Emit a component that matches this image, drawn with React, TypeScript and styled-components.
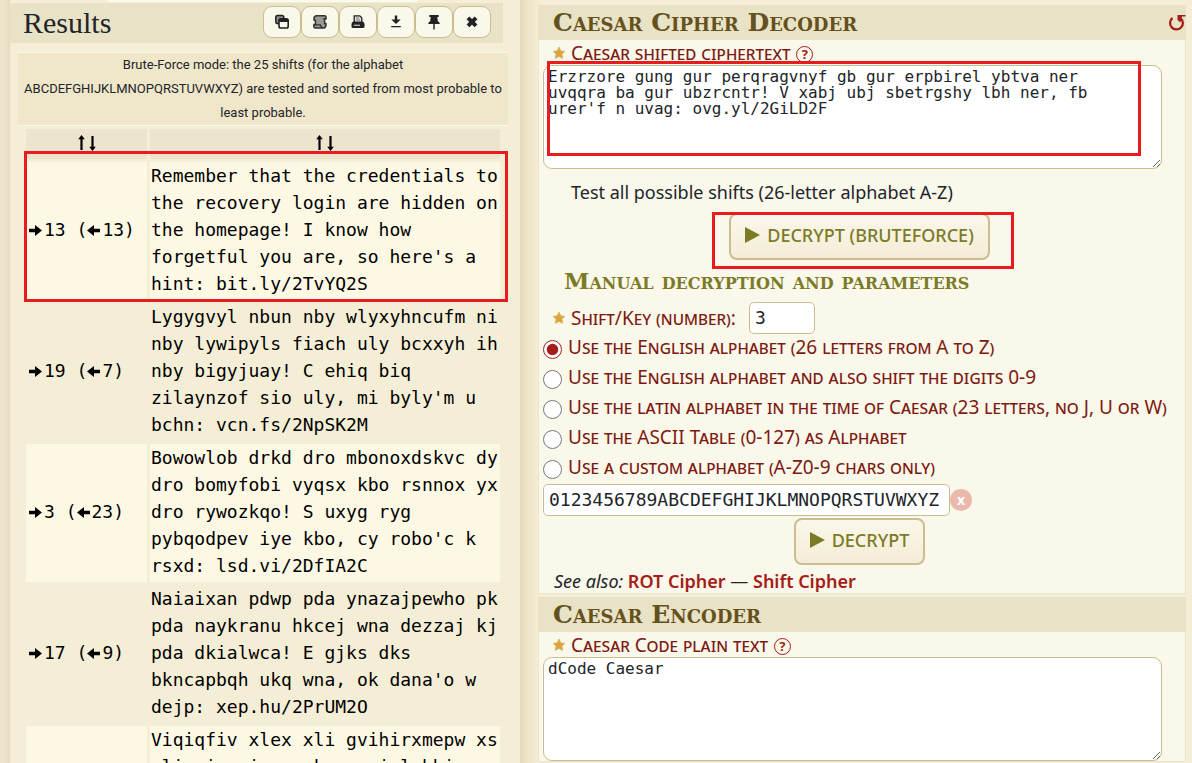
import React from "react";
import styled, { createGlobalStyle } from "styled-components";

const sans = `"Trebuchet MS", "Noto Sans", sans-serif`;
const serif = `Georgia, "Liberation Serif", serif`;
const slab = `"DejaVu Serif", serif`;
const mono = `"DejaVu Sans Mono", monospace`;

const c = {
  paper: "#f5eed6",
  bar: "#e8e2c6",
  panel: "#faf7eb",
  line: "#ccbd8e",
  ink: "#212529",
  wine: "#7d1a10",
  red: "#a61c16",
  olive: "#7b7b26",
  brown: "#65511c",
};

const Global = createGlobalStyle`
  *, *::before, *::after { box-sizing: border-box; }
  body { margin: 0; background: ${c.paper}; color: ${c.ink}; font-family: ${sans}; }
  h2, h3, p { margin: 0; }
`;

const Page = styled.div`
  display: grid;
  grid-template-columns: minmax(0, 510fr) minmax(0, 666fr);
  height: 100vh;
  overflow: hidden;
  padding: 0 6px 0 10px;
  background: linear-gradient(90deg, #ece4cc 0, #ece4cc 4px, #e5dcc0 10px, ${c.paper} 10px);
`;

const Results = styled.section``;

const SearchEdge = styled.div`
  height: 2px;
  margin: 0 102px 1px 97px;
  border-radius: 0 0 4px 4px;
  background: #fbf8ee;
`;

const ResultsBar = styled.header`
  display: flex;
  align-items: center;
  justify-content: space-between;
  height: 40px;
  margin-right: 17px;
  padding: 0 12px 0 13px;
  background: ${c.bar};
`;

const ResultsTitle = styled.h2`
  font: 400 30px/36px ${serif};
`;

const Tools = styled.div`
  display: flex;
  margin-bottom: 2px;
`;

const ToolButton = styled.button`
  display: grid;
  place-items: center;
  width: 38px;
  height: 32px;
  padding: 0;
  border: 1px solid ${c.line};
  border-radius: 9px;
  background: ${c.panel};
  color: #222;
`;

const Message = styled.p`
  margin: 9px 12px 0 8px;
  border: 1px solid #fbf7e8;
  border-width: 1px 0;
  background: #f0e6ca;
  font-family: Roboto, sans-serif;
  font-size: 13px;
  line-height: 24px;
  text-align: center;
`;

const TableWrap = styled.div`
  position: relative;
  margin: 0 17px 0 13px;
`;

const Table = styled.table`
  width: 100%;
  table-layout: fixed;
  border-spacing: 3px;
  color: #000;
  font: 18px/27px ${mono};

  tbody tr:nth-child(odd) td { background: #fcf8e4; }
`;

const SortHead = styled.th`
  height: 30px;
  padding: 0;
  background: #ece4cd;
  line-height: 0;

  &:first-child { width: 121px; }
`;

const SortButton = styled.button`
  padding: 0;
  border: 0;
  background: none;
  color: #000;
`;

const ShiftCell = styled.td`
  padding: 0 3px 3px;
  white-space: nowrap;
`;

const TextCell = styled.td`
  padding: 0 1px 3px;
  white-space: pre;
`;

const Mark = styled.div<{ $inset: string; $height?: string }>`
  position: absolute;
  inset: ${(p) => p.$inset};
  height: ${(p) => p.$height ?? "auto"};
  border: 3px solid #e81b1e;
  pointer-events: none;
`;

const Forms = styled.main`
  padding: 5px 0 0 18px;
  background: linear-gradient(90deg, #e6d9b4 0, #efe4c8 7px, #f1e7cd 13px, ${c.paper} 18px);
`;

const Panel = styled.form`
  margin-bottom: 3px;
  background: ${c.panel};
`;

const PanelTitle = styled.h2`
  display: flex;
  align-items: center;
  justify-content: space-between;
  height: 35px;
  padding-left: 15px;
  background: ${c.bar};
  color: ${c.brown};
  font: small-caps 700 25px/33px ${slab};
`;

const Reset = styled.button`
  display: flex;
  padding: 0;
  border: 0;
  background: none;
  color: ${c.red};
`;

const PanelBody = styled.div`
  display: flex;
  flex-direction: column;
  align-items: flex-start;
  padding: 0 9px 0 4px;
  border: 1px solid #eae3cd;
  border-top: 0;
`;

const LabelRow = styled.div`
  display: flex;
  align-items: center;
  gap: 6px;
  min-height: 25px;
  padding: 0 0 0 10px;
`;

const Label = styled.label`
  color: ${c.wine};
  font-size: 19px;
  font-variant: small-caps;
  line-height: 24px;
`;

const Help = styled.button`
  width: 17px;
  height: 17px;
  margin-top: 3px;
  padding: 0;
  border: 1px solid ${c.red};
  border-radius: 50%;
  background: ${c.panel};
  color: ${c.red};
  font: 700 13px/15px ${sans};
`;

const AreaWrap = styled.div`
  position: relative;
  align-self: stretch;
  margin-right: 14px;
`;

const Area = styled.textarea`
  display: block;
  width: 100%;
  height: 104px;
  padding: 3px 4px;
  border: 1px solid ${c.line};
  border-radius: 9px;
  background: #fff;
  color: ${c.ink};
  font: 16px/16px ${mono};
`;

const Hint = styled.p`
  padding: 10px 0 8px 28px;
  font-size: 18px;
  line-height: 26px;
`;

const ButtonRow = styled.div<{ $gap: string }>`
  position: relative;
  align-self: center;
  margin: ${(p) => p.$gap};
`;

const Submit = styled.button`
  display: flex;
  align-items: center;
  gap: 7px;
  height: 47px;
  padding: 0 14px 4px;
  border: 2px solid ${c.line};
  border-radius: 8px;
  background: linear-gradient(#faf7eb, #f4ecd6);
  color: ${c.olive};
  font: 500 18px/24px ${sans};
`;

const SubTitle = styled.h3`
  padding: 7px 0 7px 21px;
  color: ${c.olive};
  font: small-caps 700 23px/28px ${slab};
`;

const Field = styled.input`
  height: 32px;
  padding: 0 5px 2px;
  border: 1px solid ${c.line};
  border-radius: 5px;
  background: #fff;
  color: ${c.ink};
  font: 18px/24px ${mono};

  &[name="shift"] { width: 66px; margin-left: 7px; }
  &[name="alphabet"] { width: 407px; }
`;

const Choice = styled.label`
  display: flex;
  align-items: center;
  gap: 6px;
  height: 30px;
  color: ${c.wine};
  font-size: 19px;
  font-variant: small-caps;
  line-height: 24px;
  white-space: nowrap;

  input { flex: none; width: 19px; height: 19px; margin: 0; accent-color: ${c.red}; }
  span { padding-bottom: 4px; }
`;

const Row = styled.div`
  display: flex;
  align-items: center;
`;

const Clear = styled.button`
  width: 22px;
  height: 22px;
  padding: 0;
  border: 0;
  border-radius: 50%;
  background: #ebb9ab;
  color: #fff;
  font: 700 14px/20px ${sans};
`;

const SeeAlso = styled.p`
  padding: 5px 0 0 11px;
  font-size: 18px;
  line-height: 23px;

  a { color: ${c.red}; font-weight: 600; text-decoration: none; }
`;

const Star = () => (
  <svg width="12" height="14" viewBox="0 0 12 14" aria-hidden="true">
    <path
      d="M6 1.2 7.7 4.9 11.7 5.4 8.8 8.2 9.6 12.3 6 10.4 2.4 12.3 3.2 8.2 .3 5.4 4.3 4.9Z"
      fill="#d9a441"
      stroke="#dfb04f"
      strokeWidth="1"
      strokeLinejoin="round"
    />
  </svg>
);

const Play = () => (
  <svg width="15" height="16" viewBox="0 0 15 16" aria-hidden="true">
    <path d="M0 0 15 8 0 16Z" fill="currentColor" />
  </svg>
);

const Arrow = ({ left }: { left?: boolean }) => (
  <svg width="15" height="11" viewBox="0 0 15 11" aria-hidden="true">
    <path
      d={left ? "M0 5.5 7 0V3.8H13V7.2H7V11Z" : "M13 5.5 6 0V3.8H0V7.2H6V11Z"}
      fill="currentColor"
    />
  </svg>
);

const SortIcon = () => (
  <svg width="18" height="16" viewBox="0 0 18 16" aria-hidden="true">
    <path d="M3.5 0 6.8 4.2H4.6V15H2.4V4.2H.2Z M14.5 16 11.2 11.8H13.4V1H15.6V11.8H17.8Z" fill="currentColor" />
  </svg>
);

const toolIcons: [string, React.ReactNode][] = [
  ["Copy", <g key="i">
    <rect x="1.8" y="1.5" width="8" height="8" rx="1.8" fill="#8b8b87" stroke="#222" strokeWidth="1.5" />
    <rect x="5" y="4.8" width="9.2" height="9.2" rx="1.8" fill="#faf7eb" stroke="#222" strokeWidth="1.6" />
    <path d="M5 8V6Q5 5 6 5H13Q14.2 5 14.2 6V8Z" fill="#222" />
  </g>],
  ["Export", <g key="i">
    <path d="M4 1.8H12.8Q14.6 2.2 14 4.8H12.6V9.5H14Q14.4 12.8 12 14H3Q1.2 13.2 2 10.5H3.4V6.2H2.2Q1.2 3 4 1.8Z" fill="#989894" stroke="#333" strokeWidth="1.5" />
    <path d="M11.2 4.8H14M2 10.8H8.5Q8.6 13.5 11 14" stroke="#333" strokeWidth="1.2" fill="none" />
  </g>],
  ["Print", <g key="i">
    <path d="M4.2 8V1.8H9.8L11.8 3.8V8" fill="#ddd" stroke="#222" strokeWidth="1.3" />
    <path d="M6 4H9M6 6H10" stroke="#777" />
    <path d="M3.5 7.5H12.5Q14.5 8 14.5 10V12.5Q14.5 14 13 14H3Q1.5 14 1.5 12.5V10Q1.5 8 3.5 7.5Z" fill="#222" />
    <path d="M3.8 11.3H10" stroke="#bbb" strokeWidth="1.3" />
  </g>],
  ["Download", <path key="i" d="M6.8 1.5H9.2V5.5H12.7L8 10 3.3 5.5H6.8Z M3.2 12H12.8V13.3H3.2Z" fill="#222" />],
  ["Pin", <path key="i" d="M3.3 1H12.7V3H11.3L11.8 7.2Q13.8 8 13.8 10H8.7V15.5H7.3V10H2.2Q2.2 8 4.2 7.2L4.7 3H3.3Z" fill="#222" />],
  ["Close", <path key="i" d="M4 3.8 12 11.8M12 3.8 4 11.8" stroke="#222" strokeWidth="4" fill="none" />],
];

const rows = [
  [13, 13, "Remember that the credentials to\nthe recovery login are hidden on\nthe homepage! I know how\nforgetful you are, so here's a\nhint: bit.ly/2TvYQ2S"],
  [19, 7, "Lygygvyl nbun nby wlyxyhncufm ni\nnby lywipyls fiach uly bcxxyh ih\nnby bigyjuay! C ehiq biq\nzilaynzof sio uly, mi byly'm u\nbchn: vcn.fs/2NpSK2M"],
  [3, 23, "Bowowlob drkd dro mbonoxdskvc dy\ndro bomyfobi vyqsx kbo rsnnox yx\ndro rywozkqo! S uxyg ryg\npybqodpev iye kbo, cy robo'c k\nrsxd: lsd.vi/2DfIA2C"],
  [17, 9, "Naiaixan pdwp pda ynazajpewho pk\npda naykranu hkcej wna dezzaj kj\npda dkialwca! E gjks dks\nbkncapbqh ukq wna, ok dana'o w\ndejp: xep.hu/2PrUM2O"],
  [9, 17, "Viqiqfiv xlex xli gvihirxmepw xs\nxli vigszivc pskmr evi lmhhir sr\nxli lsqiteki! M orsa lsa\njsvkixjyp csy evi, ws livi'w e\nlmrx: fmx.pc/2XzCU2W"],
] as const;

const choices = [
  "Use the English alphabet (26 letters from A to Z)",
  "Use the English alphabet and also shift the digits 0-9",
  "Use the latin alphabet in the time of Caesar (23 letters, no J, U or W)",
  "Use the ASCII Table (0-127) as Alphabet",
  "Use a custom alphabet (A-Z0-9 chars only)",
];

export default function App() {
  return (
    <>
      <Global />
      <Page>
        <Results>
          <SearchEdge />
          <ResultsBar>
            <ResultsTitle>Results</ResultsTitle>
            <Tools>
              {toolIcons.map(([name, icon]) => (
                <ToolButton key={name} type="button" aria-label={name}>
                  <svg width="16" height="16" viewBox="0 0 16 16" aria-hidden="true">{icon}</svg>
                </ToolButton>
              ))}
            </Tools>
          </ResultsBar>
          <Message>
            Brute-Force mode: the 25 shifts (for the alphabet<br />
            ABCDEFGHIJKLMNOPQRSTUVWXYZ) are tested and sorted from most probable to<br />
            least probable.
          </Message>
          <TableWrap>
            <Table>
              <thead>
                <tr>
                  <SortHead><SortButton type="button" aria-label="Sort by shift"><SortIcon /></SortButton></SortHead>
                  <SortHead><SortButton type="button" aria-label="Sort by text"><SortIcon /></SortButton></SortHead>
                </tr>
              </thead>
              <tbody>
                {rows.map(([fwd, back, text]) => (
                  <tr key={fwd}>
                    <ShiftCell><Arrow />{fwd} (<Arrow left />{back})</ShiftCell>
                    <TextCell>{text}</TextCell>
                  </tr>
                ))}
              </tbody>
            </Table>
            <Mark $inset="25px -5px auto 1px" $height="151px" />
          </TableWrap>
        </Results>
        <Forms>
          <Panel>
            <PanelTitle>
              Caesar Cipher Decoder
              <Reset type="reset" aria-label="Reset">
                <svg width="18" height="18" viewBox="0 0 18 18" aria-hidden="true">
                  <path d="M4.5 4A6.4 6.4 0 1 0 13 4.5" fill="none" stroke="currentColor" strokeWidth="2.3" />
                  <path d="M9.5 1H17.5V2.5H14L12.5 8.5 9.5 6Z" fill="currentColor" />
                </svg>
              </Reset>
            </PanelTitle>
            <PanelBody>
              <LabelRow>
                <Star />
                <Label htmlFor="cipher">Caesar shifted ciphertext</Label>
                <Help type="button" aria-label="Help">?</Help>
              </LabelRow>
              <AreaWrap>
                <Area
                  id="cipher"
                  spellCheck={false}
                  defaultValue={"Erzrzore gung gur perqragvnyf gb gur erpbirel ybtva ner\nuvqqra ba gur ubzrcntr! V xabj ubj sbetrgshy lbh ner, fb\nurer'f n uvag: ovg.yl/2GiLD2F"}
                />
                <Mark $inset="-4px 21px 13px 4px" />
              </AreaWrap>
              <Hint>Test all possible shifts (26-letter alphabet A-Z)</Hint>
              <ButtonRow $gap="0">
                <Submit type="button"><Play />DECRYPT (BRUTEFORCE)</Submit>
                <Mark $inset="-1px -24px -9px -17px" />
              </ButtonRow>
              <SubTitle>Manual decryption and parameters</SubTitle>
              <LabelRow>
                <Star />
                <Label htmlFor="shift">Shift/Key (number):</Label>
                <Field id="shift" name="shift" defaultValue="3" />
              </LabelRow>
              {choices.map((text, i) => (
                <Choice key={text}>
                  <input type="radio" name="mode" defaultChecked={i === 0} />
                  <span>{text}</span>
                </Choice>
              ))}
              <Row>
                <Field name="alphabet" aria-label="Custom alphabet" defaultValue="0123456789ABCDEFGHIJKLMNOPQRSTUVWXYZ" />
                <Clear type="button" aria-label="Clear">x</Clear>
              </Row>
              <ButtonRow $gap="2px 0 0">
                <Submit type="button"><Play />DECRYPT</Submit>
              </ButtonRow>
              <SeeAlso>
                <em>See also:</em> <a href="#rot">ROT Cipher</a> — <a href="#shift">Shift Cipher</a>
              </SeeAlso>
            </PanelBody>
          </Panel>
          <Panel>
            <PanelTitle>Caesar Encoder</PanelTitle>
            <PanelBody>
              <LabelRow>
                <Star />
                <Label htmlFor="plain">Caesar Code plain text</Label>
                <Help type="button" aria-label="Help">?</Help>
              </LabelRow>
              <AreaWrap>
                <Area id="plain" spellCheck={false} defaultValue="dCode Caesar" />
              </AreaWrap>
            </PanelBody>
          </Panel>
        </Forms>
      </Page>
    </>
  );
}
